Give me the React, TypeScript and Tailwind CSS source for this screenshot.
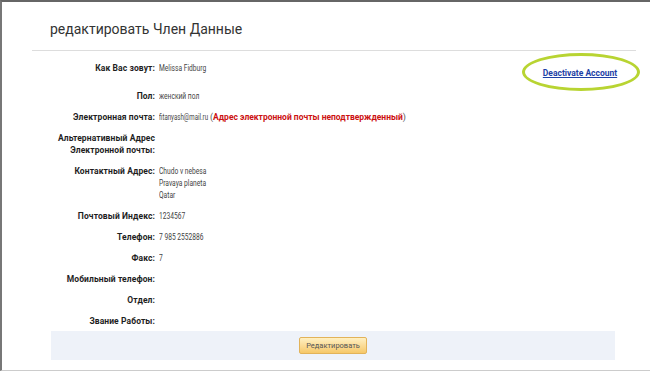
const rows: { label: string[]; value?: string[]; extra?: string }[] = [
  { label: ["Пол:"], value: ["женский пол"] },
  { label: ["Электронная почта:"], value: ["fitanyash@mail.ru"], extra: "Адрес электронной почты неподтвержденный" },
  { label: ["Альтернативный Адрес", "Электронной почты:"] },
  { label: ["Контактный Адрес:"], value: ["Chudo v nebesa", "Pravaya planeta", "Qatar"] },
  { label: ["Почтовый Индекс:"], value: ["1234567"] },
  { label: ["Телефон:"], value: ["7 985 2552886"] },
  { label: ["Факс:"], value: ["7"] },
  { label: ["Мобильный телефон:"] },
  { label: ["Отдел:"] },
  { label: ["Звание Работы:"] },
];

// the values in the shot are set in a condensed face, squeeze Roboto to match
const Narrow = ({ text }: { text: string }) => (
  <span className="inline-block whitespace-nowrap origin-left scale-x-[0.74]">{text}</span>
);

const Row = ({ label, value, extra }: { label: string[]; value?: string[]; extra?: string }) => (
  <div className="flex items-start leading-[12px]">
    <div className="w-[104px] shrink-0 text-right font-bold text-[#1e1e1e] text-[8.5px] tracking-[0.1px]">
      {label.map((l) => (
        <div key={l}>{l}</div>
      ))}
    </div>
    <div className="pl-[4px] text-[#444] text-[9px]">
      {value?.map((v) => (
        <div key={v} className="whitespace-nowrap">
          {extra ? (
            <>
              <span className="inline-block w-[51px]">
                <span className="inline-block whitespace-nowrap origin-left scale-x-[0.68]">{v}</span>
              </span>
              <span className="text-[#555]">(</span>
              <span className="text-[#cc1111] font-bold text-[8.5px]">{extra}</span>
              <span className="text-[#555]">)</span>
            </>
          ) : (
            <Narrow text={v} />
          )}
        </div>
      ))}
    </div>
  </div>
);

export default function App() {
  return (
    <div className="w-[650px] h-[371px] bg-white border-t-2 border-t-[#666] border-l-2 border-l-[#777] border-b border-b-[#ccc] overflow-hidden font-['Roboto',sans-serif]">
      <div className="ml-[30px] mr-[14px] h-[49px] border-b border-[#ddd] flex items-center">
        <h1 className="pl-[18px] pt-[6px] text-[14px] text-[#333]">редактировать Член Данные</h1>
      </div>

      <div className="relative ml-[49px] w-[564px]">
        <div className="pt-[11px] flex flex-col gap-[9px]">
          <div className="pb-[7px]">
            <Row label={["Как Вас зовут:"]} value={["Melissa  Fidburg"]} />
          </div>
          {rows.map((r) => (
            <Row key={r.label.join()} {...r} />
          ))}
        </div>

        <div className="absolute right-[-25px] top-[2px] w-[118px] h-[38px] rounded-[50%] border-[3px] border-[#b8d432] flex items-center justify-center">
          <a href="#" className="text-[8.5px] font-bold text-[#1d3fa6] underline pt-[3px] pr-[2px]">
            Deactivate Account
          </a>
        </div>

        <div className="mt-[4px] h-[29px] bg-[#eef2f9] flex items-center justify-center">
          <button className="h-[17px] px-[6px] border border-[#e2b35a] rounded-[2px] bg-gradient-to-b from-[#fff0c2] to-[#f6c868] text-[7.5px] text-[#555]">
            Редактировать
          </button>
        </div>
      </div>
    </div>
  );
}
